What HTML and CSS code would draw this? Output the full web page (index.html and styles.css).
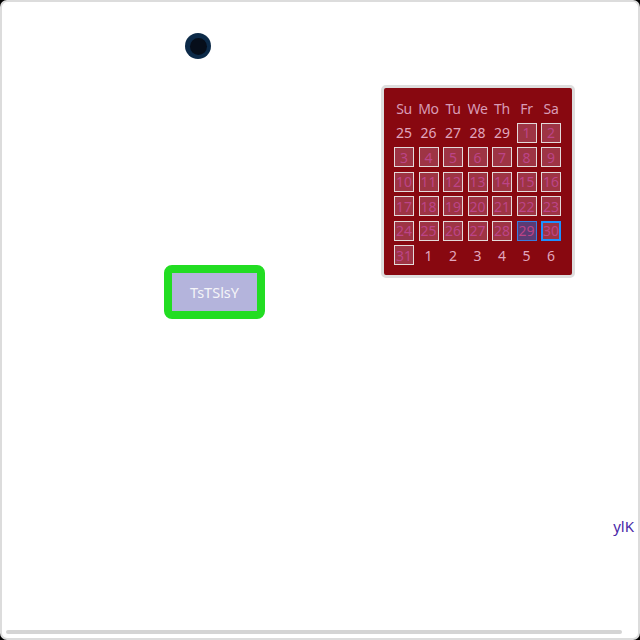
FILE: index.html
```html
<!DOCTYPE html>
<html>
<head>
<meta charset="utf-8">
<link rel="stylesheet" href="styles.css">
</head>
<body>
<div class="frame">
  <div class="top">
    <div class="dot"><div class="dot-core"></div></div>
  </div>
  <div class="middle">
    <div class="btn-col">
      <button class="btn">TsTSlsY</button>
    </div>
    <div class="calendar">
      <div class="grid">
        <div class="hd">Su</div><div class="hd">Mo</div><div class="hd">Tu</div><div class="hd">We</div><div class="hd">Th</div><div class="hd">Fr</div><div class="hd">Sa</div>
        <div class="d">25</div><div class="d">26</div><div class="d">27</div><div class="d">28</div><div class="d">29</div><div class="d b">1</div><div class="d b">2</div>
        <div class="d b">3</div><div class="d b">4</div><div class="d b">5</div><div class="d b">6</div><div class="d b">7</div><div class="d b">8</div><div class="d b">9</div>
        <div class="d b">10</div><div class="d b">11</div><div class="d b">12</div><div class="d b">13</div><div class="d b">14</div><div class="d b">15</div><div class="d b">16</div>
        <div class="d b">17</div><div class="d b">18</div><div class="d b">19</div><div class="d b">20</div><div class="d b">21</div><div class="d b">22</div><div class="d b">23</div>
        <div class="d b">24</div><div class="d b">25</div><div class="d b">26</div><div class="d b">27</div><div class="d b">28</div><div class="d sel">29</div><div class="d focus">30</div>
        <div class="d b">31</div><div class="d">1</div><div class="d">2</div><div class="d">3</div><div class="d">4</div><div class="d">5</div><div class="d">6</div>
      </div>
    </div>
  </div>
  <div class="label-row"><span class="label">ylK</span></div>
  <div class="bar"></div>
</div>
</body>
</html>
```
FILE: styles.css
```css
html, body {
  margin: 0;
  padding: 0;
  background: #000;
}
.frame {
  width: 640px;
  height: 640px;
  box-sizing: border-box;
  border: 2px solid #dcdcdc;
  border-radius: 7px;
  background: #fff;
  font-family: "Noto Sans", "Open Sans", sans-serif;
  display: flex;
  flex-direction: column;
  overflow: hidden;
}
.top {
  padding: 31px 0 0 183px;
  height: 26px;
}
.dot {
  width: 26px;
  height: 26px;
  border-radius: 50%;
  background: #0c2a48;
  display: flex;
  align-items: center;
  justify-content: center;
}
.dot-core {
  width: 17px;
  height: 17px;
  border-radius: 50%;
  background: #060e1a;
}
.middle {
  display: flex;
  align-items: flex-start;
}
.btn-col {
  padding: 206px 0 0 162px;
}
.btn {
  display: block;
  width: 101px;
  height: 54px;
  box-sizing: border-box;
  border: 8px solid #22dd22;
  border-radius: 8px;
  background: #b4b4dc;
  box-shadow: inset 0 0 0 1px #b4b4dc;
  color: #f4f4f8;
  font-family: "Noto Sans", sans-serif;
  font-size: 14.5px;
  padding: 0;
  margin: 0;
}
.calendar {
  margin: 26px 0 0 116px;
  border: 3px solid #dedede;
  border-radius: 5px;
  background: #880810;
  padding: 10px 11px 10px 10px;
}
.grid {
  display: grid;
  grid-template-columns: repeat(7, 20px);
  grid-auto-rows: 20px;
  column-gap: 4.5px;
  row-gap: 4.5px;
}
.hd, .d {
  display: flex;
  align-items: center;
  justify-content: center;
  font-size: 14px;
  white-space: nowrap;
  box-sizing: border-box;
}
.hd {
  color: #d89cb6;
  letter-spacing: -0.3px;
}
.d {
  color: #e0a6be;
}
.d.b {
  border: 1px solid #e4dada;
  background: #9e3444;
  color: #bc4488;
}
.d.sel {
  border: 1px solid #3a7ee0;
  background: #5c3a74;
  color: #bc4488;
}
.d.focus {
  border: 2px solid #1e90ff;
  background: #9e3444;
  color: #bc4488;
}
.label-row {
  display: flex;
  justify-content: flex-end;
  padding: 197px 4px 0 0;
}
.label {
  color: #4a2aa8;
  font-size: 15px;
  line-height: 20px;
}
.bar {
  margin: 94px 0 0 4px;
  width: 616px;
  height: 4px;
  border-radius: 2px;
  background: #d4d4d4;
}
```
